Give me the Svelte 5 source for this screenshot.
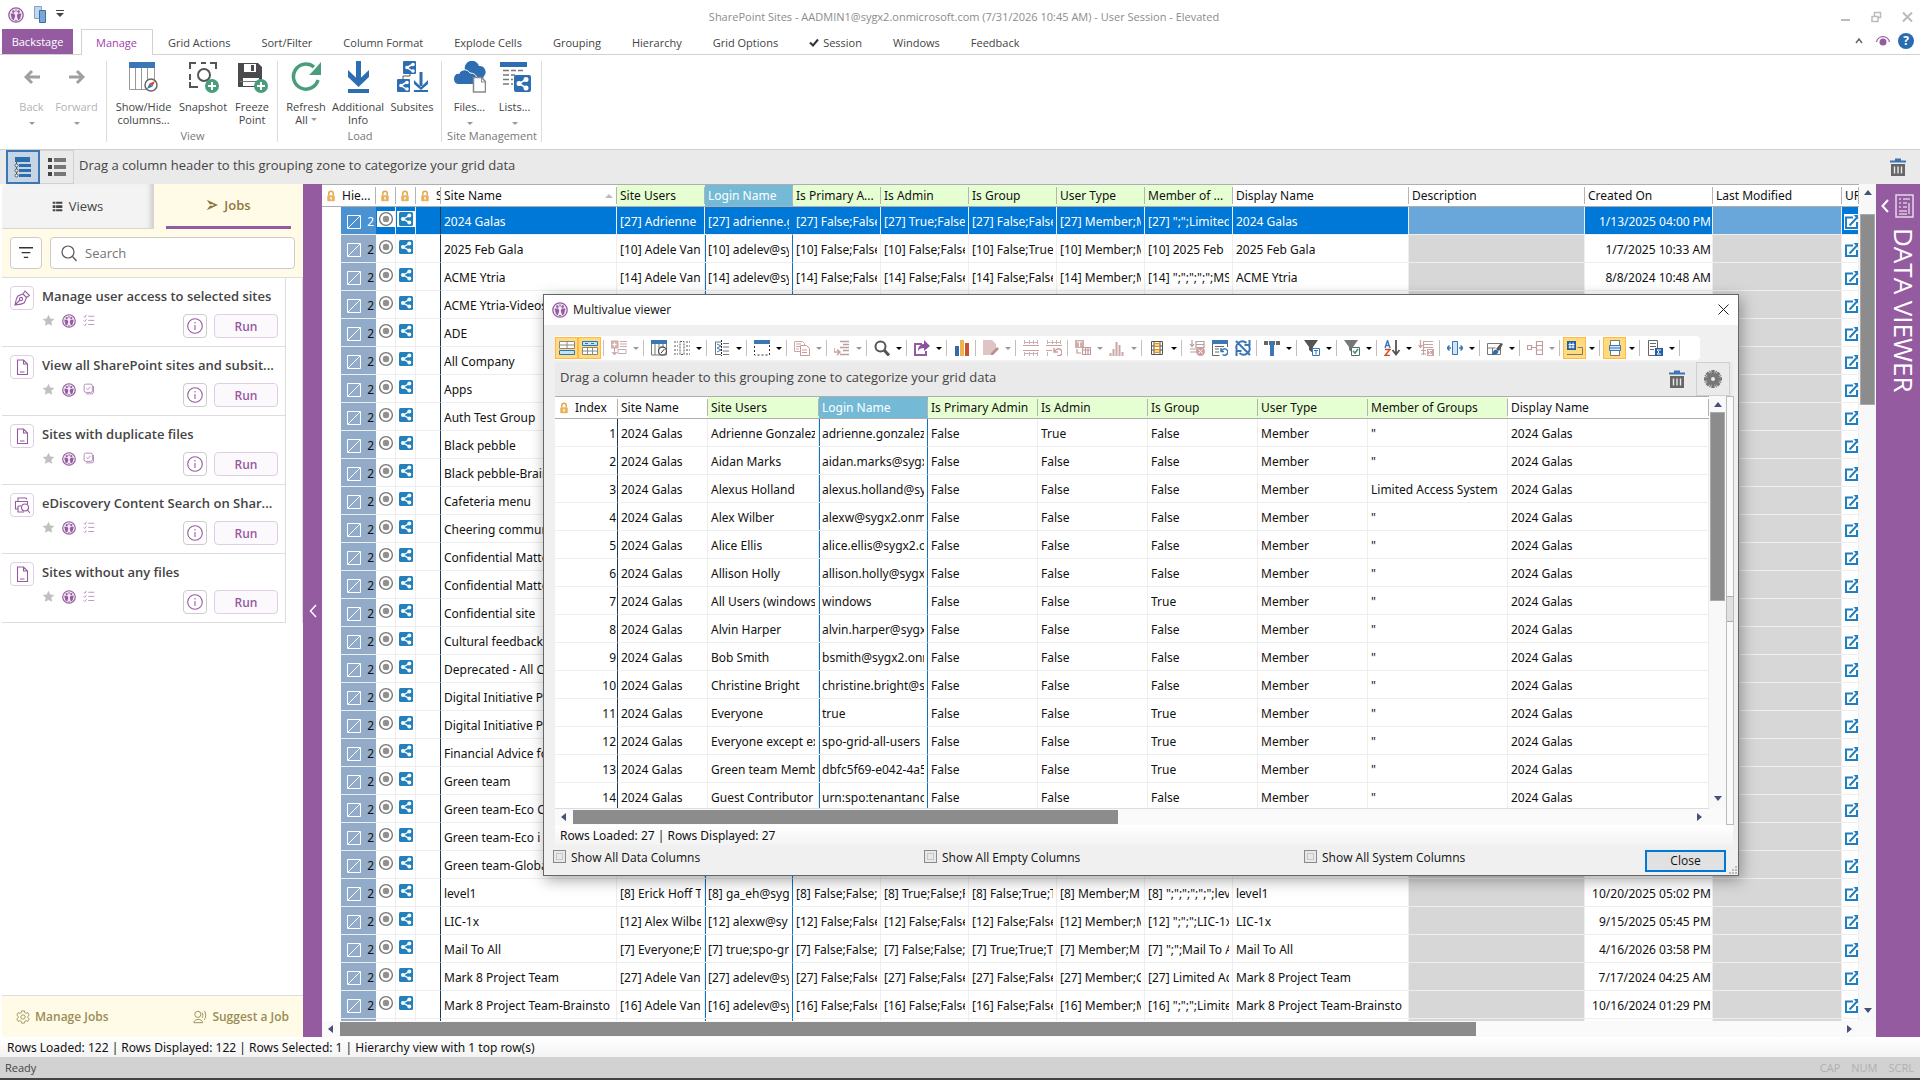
<script>
    const icons = {
        logo: `<circle cx="8" cy="8" r="7.2" fill="#f3e9f5" stroke="#955ba0" stroke-width="1.3"/><circle cx="5.4" cy="4.6" r="1.3" fill="#955ba0"/><circle cx="10.6" cy="4.6" r="1.3" fill="#955ba0"/><path d="M2.6 6.6h3.6l1 2.2-1.4 4.6-2-1.6z M13.4 6.6H9.8l-1 2.2 1.4 4.6 2-1.6z" fill="#955ba0"/><path d="M8 2.2v2.4M6.8 13.6h2.4" stroke="#955ba0"/>`,
        lock: `<path d="M5 7V4.6a3 3 0 0 1 6 0V7" fill="none" stroke="#e0a850" stroke-width="2"/><rect x="3" y="7" width="10" height="8" rx="1" fill="#e8b25c"/><circle cx="8" cy="10.5" r="1.2" fill="#fff"/><path d="M8 10.5v3" stroke="#fff"/>`,
        slash: `<path d="M1.5 1.5h13v13h-13zM2 14 14 2" fill="none" stroke="#fff"/>`,
        record: `<circle cx="8" cy="8" r="6.4" fill="#fff" stroke="#777" stroke-width="1.4"/><circle cx="8" cy="8" r="3.2" fill="#909090"/>`,
        share: `<rect x="1" y="1" width="14" height="14" rx="1.5" fill="#2280bc"/><path d="M11.5 4.5 5.2 8l6.3 3.6" fill="none" stroke="#fff" stroke-width="1.3"/><circle cx="11.3" cy="4.6" r="2" fill="#fff"/><circle cx="5" cy="8" r="2" fill="#fff"/><circle cx="11.3" cy="11.4" r="2" fill="#fff"/>`,
        link: `<path d="M9 3.5H2v10.5h11V8" fill="none" stroke="#1f7fc0" stroke-width="2"/><path d="M5.500 11.500 13 3.500" stroke="#1f7fc0" stroke-width="2"/><path d="M9.500 1h5.500v5.500z" fill="#1f7fc0"/>`,
        trash: `<path d="M0 2.5h16v2H0zM5 .5h6v2H5z" fill="#3b74b0"/><path d="M1 6h14v12H1z" fill="#666"/><path d="M4.5 8.5v7M8 8.5v7M11.5 8.5v7" stroke="#eaeaea" stroke-width="1.4"/>`,
        gear: `<g stroke="#777" stroke-width="3"><path d="M8 0v16M0 8h16M2.4 2.4l11.2 11.2M13.6 2.4 2.4 13.6"/><path d="M4.9.6l6.2 14.8M11.1.6 4.9 15.4M.6 4.9l14.8 6.2M.6 11.1l14.8-6.2" stroke-width="1"/></g><circle cx="8" cy="8" r="5" fill="#777"/><circle cx="8" cy="8" r="1.8" fill="#eaeaea"/>`,
        tree: `<path d="M4 2h15v5H4zM8 9h12v3H8zM8 14h12v3H8zM8 19h12v3H8z" fill="#2d6fae"/><path d="M5.5 7v14" stroke="#555"/><g fill="#fff" stroke="#555"><circle cx="5.5" cy="10.5" r="1.5"/><circle cx="5.5" cy="15.5" r="1.5"/><circle cx="5.5" cy="20.5" r="1.5"/></g>`,
        list: `<path d="M3 3h4v4H3zM3 10h4v4H3zM3 17h4v4H3z" fill="#444"/><path d="M9 3h12v4H9zM9 10h12v4H9zM9 17h12v4H9z" fill="#777"/>`,
        plusBadge: `<circle cx="25" cy="25" r="7" fill="#4a9d7a"/><path d="M25 21v8M21 25h8" stroke="#fff" stroke-width="2"/>`,
        columns: `<path d="M2.5 6v22.5h25V6M8.5 6v22M14.5 6v22M20.5 6v22" fill="#fff" stroke="#999"/><path d="M2 1h26v6H2z" fill="#3b77b5"/><circle cx="24" cy="24" r="6" fill="#fff" stroke="#666" stroke-width="1.5"/><path d="m28 20-2.500 5.500-3-3z" fill="#d9482b"/><path d="m20 28 2.500-5.500 3 3z" fill="#2e73b8"/>`,
        snapshot: `<path d="M3 8V2h6M14 2h5M23 2h6v6M3 13v6M3 21v5h8" fill="none" stroke="#555" stroke-width="2"/><circle cx="17" cy="14" r="6" fill="none" stroke="#555" stroke-width="2"/>`,
        freeze: `<path d="M2 2h20l4 4v20H2z" fill="#4b4b4f"/><path d="M8 3h12v8H8zM7 17h16v8H7z" fill="#fff"/><path d="M15 4h3v6h-3z" fill="#4b4b4f"/><path d="M4 20.500h22" stroke="#777"/>`,
        refresh: `<path d="M28 19A12.500 12.500 0 1 1 24 6" fill="none" stroke="#4a9d7a" stroke-width="3.500"/><path d="M31 1v13H19l5-5z" fill="#4a9d7a"/>`,
        download: `<path d="M16.500 0v20" stroke="#2f6db2" stroke-width="5"/><path d="M6 9l10.500 10L27 9v7L16.500 26 6 16z" fill="#2f6db2"/><path d="M6 28h21v4H6z" fill="#2f6db2"/>`,
        subsites: `<rect x="7" y="0" width="13" height="13" rx="1" fill="#2f6db2"/><rect x="1" y="18" width="13" height="13" rx="1" fill="#2f6db2"/><path d="m17 3-6 3.500 6 4M11 21l-6 3.500 6 4" fill="none" stroke="#fff" stroke-width="1.500"/><g fill="#fff"><circle cx="17" cy="3.500" r="1.800"/><circle cx="11" cy="6.500" r="1.800"/><circle cx="17" cy="10" r="1.800"/><circle cx="11" cy="21.500" r="1.800"/><circle cx="5" cy="24.500" r="1.800"/><circle cx="11" cy="28" r="1.800"/></g><path d="M7 18v-3h7v-2" fill="none" stroke="#555"/><path d="M25 11v14" stroke="#2f6db2" stroke-width="3"/><path d="m18 19 7 7 7-7v4l-7 6-7-6zM18 29h14v2H18z" fill="#2f6db2"/>`,
        files: `<path d="M10 20a7 7 0 0 1 2-11 7 7 0 0 1 14-4 6 6 0 0 1 5 10l-2 5z" fill="#2f6db2"/><path d="M1 18c0-4 3-6 5-5 2-5 9-5 11-1 5 0 6 3 6 6v5H6c-3 0-5-2-5-5z" fill="#2f6db2"/><path d="M5.500 13c3-6 9-5 11.500-1 4 0 6 2 6.500 4" fill="none" stroke="#fff"/><path d="M20.500 16.500h8l4 4V31h-12z" fill="#fff" stroke="#888" stroke-width="1.500"/><path d="M28.500 16.500V21h4" fill="none" stroke="#888"/>`,
        lists: `<path d="M2 1h27v5H2z" fill="#2f6db2"/><path d="M5 9.500h6M13 9.500h5M20 9.500h5M5 14h6M13 14h4M5 18.500h6M13 18.500h2M5 23h6M13 23h2" stroke="#777" stroke-width="1.500"/><rect x="16" y="14" width="17" height="17" rx="2" fill="#2f6db2"/><path d="m29 18-8 4.500 8 5" fill="none" stroke="#fff" stroke-width="1.500"/><g fill="#fff"><circle cx="28" cy="18.500" r="2.500"/><circle cx="21" cy="22.500" r="2.500"/><circle cx="28" cy="27" r="2.500"/></g>`,
        back: `<path d="M16 8H2M8 2 2 8l6 6" fill="none" stroke="#a0a0a0" stroke-width="3"/>`,
        forward: `<path d="M0 8h14M8 2l6 6-6 6" fill="none" stroke="#a0a0a0" stroke-width="3"/>`,
        views: `<path d="M1 1h4v3H1zM1 6h4v4H1zM1 12h4v3H1zM6 1h9v3H6zM6 6h9v4H6zM6 12h9v3H6z" fill="#444"/>`,
        jobs: `<path d="M1 1l15 7-15 7 4-6h5V7H5z" fill="#8a7a42"/>`,
        filter: `<path d="M0 2h16M3 7.5h10M5.500 13h5" stroke="#333" stroke-width="1.500"/>`,
        search: `<circle cx="7" cy="7" r="6" fill="none" stroke="#555" stroke-width="1.200"/><path d="m11.500 11.500 4 4.500" stroke="#555" stroke-width="1.200"/>`,
        pen: `<g fill="none" stroke="#955ba0" stroke-width="1.100"><path d="M1 15c1-4 1-7 3-9l5-2 3.500 3.500-2 5c-2 2-5 2-9.500 2.500zM9 4l2-3 4.500 4.500-3 2M1 15l5-5"/><circle cx="7" cy="9" r="1.600"/></g>`,
        doc: `<path d="M3.500 1h6l4 4v10.500h-10zM9.500 1v4h4M6 13h4.500" fill="none" stroke="#955ba0" stroke-width="1.100"/>`,
        discovery: `<g fill="none" stroke="#955ba0" stroke-width="1.100"><path d="M4 4.500V1h8l1 1.500M4 12H1.500V4.500h12V7M4 9v6h6M4 9h3"/><circle cx="11" cy="10.500" r="3.500"/><path d="m13.500 13 2.500 3"/></g>`,
        star: `<path d="m8 1 2.200 4.600 5 .6-3.700 3.400 1 5L8 12.200 3.500 14.600l1-5L.8 6.200l5-.6z" fill="#c0c0c0"/>`,
        checks: `<path d="m1 3 1.500 1.500L4.500 1M1 8.500 2.500 10l2-3M1 14l1.500 1.500 2-3M7 3h8M7 8.500h8M7 14h8" fill="none" stroke="#b58cbc" stroke-width="1.200"/>`,
        copyCheck: `<rect x="1.500" y="1.500" width="11" height="11" rx="2" fill="none" stroke="#b58cbc" stroke-width="1.300"/><path d="M14 4v8q0 2.500-2.500 2.500H4M4.500 7l2 2 3.500-4" fill="none" stroke="#b58cbc" stroke-width="1.300"/>`,
        info: `<circle cx="8" cy="8" r="7.300" fill="none" stroke="#955ba0" stroke-width="1.100"/><path d="M8 4v1.500M8 7v5" stroke="#a779b0" stroke-width="1.300"/>`,
        cog: `<g fill="none" stroke="#9a8c56"><circle cx="8" cy="8" r="2.500"/><path d="M6.500 1h3l.5 2 1.500.8 2-.8 1.500 2.700L13.500 7.500v1l1.500 1.800-1.500 2.700-2-.8-1.500.8-.5 2h-3L6 13l-1.500-.8-2 .8L1 10.300l1.500-1.800v-1L1 5.700 2.500 3l2 .8L6 3z"/></g>`,
        suggest: `<g fill="none" stroke="#9a8c56" stroke-width="1.100"><path d="M2 5a3.500 3.500 0 1 1 7 0 3.500 3.500 0 0 1-7 0M1 14.500c0-5 10-5 10 0zM10.500 3c1 2 1 4 0 6M13 1c2 3 2 7 0 10"/></g>`,
        // viewer toolbar
        rowBottom: `<path d="M.5 1.500h15v7H.5zM8 1.500v7M.5 5h15" fill="#fff" stroke="#888"/><path d="M.5 10.500h15v4H.5z" fill="#bfe3f7" stroke="#2f75b5"/>`,
        rowTop: `<path d="M.5 1.500h15v4H.5z" fill="#bfe3f7" stroke="#2f75b5"/><path d="M3 3.500h3M9 3.500h3" stroke="#2f75b5"/><path d="M.5 7.500h15v7H.5zM5.500 7.500v7M10.500 7.500v7M.5 11h15" fill="#fff" stroke="#888"/>`,
        groupAdd: `<path d="M0 1h7v7H0zM3.500 8v7M1 12l2.500 3L6 12" fill="#d9b7b7" stroke="#cfa5a5"/><path d="M1.500 4.500h4M3.500 2.500v4" stroke="#fff"/><path d="M9 1.500h7M9 4h7M9 6.500h7M7 9.500h8v4H7z" fill="none" stroke="#c9aaaa"/>`,
        gridCompass: `<path d="M.5 1h15v14H.5zM4 4v11M8 4v11M12 4v11" fill="#fff" stroke="#777"/><path d="M0 0h16v4H0z" fill="#3b77b5"/><circle cx="11.500" cy="11" r="4" fill="#fff" stroke="#555" stroke-width="1.300"/><path d="m10 13 3.500-4" stroke="#333"/>`,
        colDash: `<path d="M6 1.500h4v13H6zM0 2h4M0 6h4M0 10h4M0 14h4M12 2h4M12 6h4M12 10h4M12 14h4" fill="none" stroke="#555" stroke-dasharray="2 1"/>`,
        colZip: `<path d="M1 2h6M1 14.500h6M1.500 2v12M9 3.500h6M9 7h6M9 11h6M9 14.500h6" stroke="#777"/><path d="m3 4 4 2-4 2 4 2-4 2" fill="none" stroke="#3b77b5"/><path d="M7.500 0v16" stroke="#222" stroke-dasharray="2 1"/>`,
        selectBox: `<path d="M.5 2v13h15V2" fill="none" stroke="#333" stroke-dasharray="2 2"/><path d="M0 0h16v4H0z" fill="#3b77b5"/>`,
        copy: `<path d="M.5 1.500h8l2 2v8H.5zM2 4h5M2 6.500h4M2 9h3" fill="#fff" stroke="#cfa5a5"/><path d="M6.500 5.500h6l3 3v7h-9zM8 10h5M8 12.500h5" fill="#fff" stroke="#c99a9a"/>`,
        indent: `<path d="M6 1.500h9M9 4.500h6M6 7.500h9M9 10.500h6M6 14.500h9" stroke="#b9a0a0" stroke-width="1.300"/><path d="M0 8v4h5M3 9.500 6 12l-3 3" fill="none" stroke="#cf9f9f" stroke-width="1.500"/>`,
        find: `<circle cx="6.500" cy="6.500" r="5" fill="none" stroke="#555" stroke-width="2"/><path d="m10 10 5 5.500" stroke="#555" stroke-width="3"/>`,
        exportTo: `<path d="M8 4H1v11h11v-4" fill="none" stroke="#955ba0" stroke-width="2"/><path d="M4 11c0-5 3-7 6-7V0l6 6-6 5V8c-3 0-5 1-6 3z" fill="#8a51a0"/>`,
        chart: `<path d="M1 6h4v10H1z" fill="#2e6da8"/><path d="M6 0h4v16H6z" fill="#eeb34e"/><path d="M11 3h4v13h-4z" fill="#c8532c"/>`,
        edit: `<path d="M0 0h9l4 4v5l-5 6H0z" fill="#dfc4c4"/><path d="m8 13 6-6 2 2-6 6H8z" fill="#b98f8f"/>`,
        splitRows: `<path d="M0 5.500h16M0 10.500h16" stroke="#cf9f9f"/><path d="M1.500 0v4M6.500 0v4M10.500 0v4M14.500 0v4M1.500 12v4M6.500 12v4M10.500 12v4M14.500 12v4M1 2.500h14M1 13.500h14" stroke="#c9b3b3"/>`,
        undoRows: `<path d="M0 5.500h16M0 10.500h6" stroke="#cf9f9f"/><path d="M1.500 0v4M6.500 0v4M10.500 0v4M14.500 0v4M1.500 12v4M1 2.500h14" stroke="#c9b3b3"/><path d="M8 8v4h4M9 12a3.500 3.500 0 1 1 2 3.500" fill="none" stroke="#cf9f9f" stroke-width="1.500"/>`,
        toCalendar: `<path d="M0 0h9v8H0z" fill="#cfaeae"/><path d="M2 2h5M4.500 2v5" stroke="#fff"/><path d="M2 9v4h4M7.500 7.500h8v7h-8zM8 10h8M10.500 8v7M13 8v7" fill="none" stroke="#c39a9a" stroke-width="1.200"/>`,
        histogram: `<path d="M1.500 16v-3M4.500 16V9M7.500 16V2M10.500 16V5M13.500 16v-4" stroke="#cba6a6" stroke-width="2"/>`,
        cellPick: `<path d="M2.500 1.500h11v13h-11zM2 6h12M2 10h12M5 2v12M11 2v12" fill="#fff" stroke="#555"/><path d="M5.500 3.500h5v3h-5zM5.500 9.500h5v3h-5z" fill="#ffd27a" stroke="#d59123"/>`,
        sumRemove: `<path d="M3 0v6M1 4l2 2.500L5 4M7 1.500h8v6H7zM7 4.500h8M1 9h7M1 12h6" fill="none" stroke="#b9a0a0" stroke-width="1.200"/><circle cx="11.500" cy="11.500" r="4.500" fill="#cfa0a0"/><path d="m9.500 9.500 4 4m0-4-4 4" stroke="#fff"/>`,
        gridRefresh: `<path d="M.5 3v12.500h7M15.500 3v4M3 6.500h9M3 9h4M3 12h4" fill="none" stroke="#666"/><path d="M0 0h16v4H0z" fill="#3b77b5"/><path d="M9 8v3.500h3M9.500 11a3.200 3.200 0 1 1 1 3.500" fill="none" stroke="#3b77b5" stroke-width="1.500"/>`,
        noRefresh: `<path d="M2 10a6 6 0 0 1 9.500-7M14 6a6 6 0 0 1-9.500 7M14.500 0v5h-5M1.500 16v-5h5M1 1l14 14" fill="none" stroke="#3b77b5" stroke-width="2"/>`,
        freezeTop: `<path d="M0 1h16v4H0z" fill="#666"/><path d="M6 1h4v15H6z" fill="#3b77b5"/><path d="M4.500 1v4M11.500 1v4" stroke="#fff"/>`,
        filterText: `<path d="M0 0h14L9 7v6l-4-3V7z" fill="#555"/><path d="M8.500 8.500h7v7h-7z" fill="#fff" stroke="#3b77b5"/><path d="M10 10.500h4M12 10.500v4" stroke="#3b77b5"/>`,
        filterCheck: `<path d="M0 0h14L9 7v6l-4-3V7z" fill="#777"/><path d="M7.500 7.500h8v8h-8z" fill="#fff" stroke="#666"/><path d="m9 11 2 2 3-4" fill="none" stroke="#2b9a5b" stroke-width="1.500"/>`,
        sortAZ: `<path d="M1 8 3.500.500 6 8M2 5.500h3" fill="none" stroke="#3b77b5" stroke-width="1.400"/><path d="M1 9.500h5l-5 6h5" fill="none" stroke="#d04a2b" stroke-width="1.400"/><path d="M12 0v14M8.500 10l3.500 4.500L15.500 10" fill="none" stroke="#555" stroke-width="1.800"/>`,
        sumList: `<path d="M2.500 0v7M.5 5l2 2.500 2-2.500M6 1.500h9M6 4.500h9M6 7.500h9M3 10.500h5M3 14h5M5.500 1v14" fill="none" stroke="#c1a3a3" stroke-width="1.200"/><path d="M9 9h7v7H9z" fill="#cfa5a5"/><path d="M14 10.500h-3.500l2 2-2 2H14" fill="none" stroke="#fff"/>`,
        fitWidth: `<path d="M5.500 1.500h5v13h-5z" fill="#cfe6f7" stroke="#3b77b5"/><path d="M0 8h4M16 8h-4M2.500 5.500 0 8l2.500 2.500M13.500 5.500 16 8l-2.500 2.500" fill="none" stroke="#3b77b5" stroke-width="1.500"/>`,
        paint: `<path d="M.5 3.500h13v11H.5zM.5 8h8M5.500 8v7" fill="#fff" stroke="#777"/><path d="m9 9 5-6 2 1-4 7z" fill="#555"/><path d="M5 15c1-4 2-6 5-5s1 5-5 5z" fill="#2e6da8"/>`,
        hierarchy: `<path d="M.5 5.500h4v4h-4zM5 7.500h4M9.500 1.500h6v13h-6zM9.500 5.500h6M9.500 10h6" fill="none" stroke="#c19c9c" stroke-width="1.200"/>`,
        numberTag: `<path d="M0 1h9v9H0z" fill="#1f5fa8"/><path d="M3 2.500v6M6 2.500v6M1.500 4.500h6M1.500 7h6" stroke="#fff"/><path d="M0 14.500h15.500v-7h-5" fill="none" stroke="#777"/>`,
        rowGap: `<path d="M3.500 5V.500h9V5M3.500 11v4.500h9V11" fill="#fff" stroke="#777"/><path d="M2.500 5.500h11v5h-11zM2.500 8h11" fill="#cfe6f7" stroke="#3b77b5"/>`,
        totals: `<path d="M1.500.500h9v15h-9zM3 3.500h6M3 6.500h6M3 9.500h4" fill="#fff" stroke="#666"/><path d="M8 8h8v8H8z" fill="#1f5fa8"/><path d="M14 10h-4l2 2-2 2h4" fill="none" stroke="#fff"/>`,
    }

    const tabs = ["Manage", "Grid Actions", "Sort/Filter", "Column Format", "Explode Cells", "Grouping", "Hierarchy", "Grid Options", "Session", "Windows", "Feedback"]

    const ribbon = [
        { name: "", items: [
            { icon: "back", label: ["Back"], w: 45, off: true, menu: true },
            { icon: "forward", label: ["Forward"], w: 45, off: true, menu: true },
        ] },
        { name: "View", items: [
            { icon: "columns", label: ["Show/Hide", "columns..."], w: 63 },
            { icon: "snapshot", label: ["Snapshot"], w: 56, badge: true },
            { icon: "freeze", label: ["Freeze", "Point"], w: 42, badge: true },
        ] },
        { name: "Load", items: [
            { icon: "refresh", label: ["Refresh", "All"], w: 46, inlineMenu: true },
            { icon: "download", label: ["Additional", "Info"], w: 58 },
            { icon: "subsites", label: ["Subsites"], w: 50 },
        ] },
        { name: "Site Management", items: [
            { icon: "files", label: ["Files..."], w: 45, menu: true },
            { icon: "lists", label: ["Lists..."], w: 45, menu: true },
        ] },
    ]

    const jobs = [
        { icon: "pen", title: "Manage user access to selected sites", kind: "checks" },
        { icon: "doc", title: "View all SharePoint sites and subsit...", kind: "copyCheck" },
        { icon: "doc", title: "Sites with duplicate files", kind: "copyCheck" },
        { icon: "discovery", title: "eDiscovery Content Search on Shar...", kind: "checks" },
        { icon: "doc", title: "Sites without any files", kind: "checks" },
    ]

    const siteCols = [
        { name: "Site Name", w: 176, sorted: true },
        { name: "Site Users", w: 88, green: true },
        { name: "Login Name", w: 88, picked: true },
        { name: "Is Primary A...", w: 88, green: true },
        { name: "Is Admin", w: 88, green: true },
        { name: "Is Group", w: 88, green: true },
        { name: "User Type", w: 88, green: true },
        { name: "Member of ...", w: 88, green: true },
        { name: "Display Name", w: 176 },
        { name: "Description", w: 176 },
        { name: "Created On", w: 128 },
        { name: "Last Modified", w: 129 },
    ]

    const site = (name, values = [], created = "") => [name, ...Array.from({ length: 7 }, (_, i) => values[i] ?? ""), name, "", created, ""]
    const sites = [
        site("2024 Galas", ["[27] Adrienne", "[27] adrienne.g", "[27] False;False", "[27] True;False", "[27] False;False", "[27] Member;M", '[27] ";";Limited'], "1/13/2025 04:00 PM"),
        site("2025 Feb Gala", ["[10] Adele Van", "[10] adelev@sy", "[10] False;False", "[10] False;False", "[10] False;True", "[10] Member;M", "[10] 2025 Feb"], "1/7/2025 10:33 AM"),
        site("ACME Ytria", ["[14] Adele Van", "[14] adelev@sy", "[14] False;False", "[14] False;False", "[14] False;False", "[14] Member;M", '[14] ";";";";";MS'], "8/8/2024 10:48 AM"),
        ...["ACME Ytria-Videos", "ADE", "All Company", "Apps", "Auth Test Group", "Black pebble", "Black pebble-Brain", "Cafeteria menu", "Cheering commun", "Confidential Matter", "Confidential Matter", "Confidential site", "Cultural feedback", "Deprecated - All C", "Digital Initiative Pl", "Digital Initiative Pl", "Financial Advice fo", "Green team", "Green team-Eco C", "Green team-Eco i", "Green team-Globa"].map((n) => site(n)),
        site("level1", ["[8] Erick Hoff T", "[8] ga_eh@syg", "[8] False;False;", "[8] True;False;F", "[8] False;True;T", "[8] Member;M", '[8] ";";";";";";lev'], "10/20/2025 05:02 PM"),
        site("LIC-1x", ["[12] Alex Wilbe", "[12] alexw@sy", "[12] False;False", "[12] False;False", "[12] False;False", "[12] Member;M", '[12] ";";";LIC-1x'], "9/15/2025 05:45 PM"),
        site("Mail To All", ["[7] Everyone;Ev", "[7] true;spo-gr", "[7] False;False;", "[7] False;False;", "[7] True;True;Tr", "[7] Member;M", '[7] ";";Mail To A'], "4/16/2026 03:58 PM"),
        site("Mark 8 Project Team", ["[27] Adele Van", "[27] adelev@sy", "[27] False;False", "[27] False;False", "[27] False;False", "[27] Member;G", "[27] Limited Ac"], "7/17/2024 04:25 AM"),
        site("Mark 8 Project Team-Brainsto", ["[16] Adele Van", "[16] adelev@sy", "[16] False;False", "[16] False;False", "[16] False;False", "[16] Member;M", '[16] ";";";Limite'], "10/16/2024 01:29 PM"),
        site(""),
    ]

    // "v" is a drop-down arrow, "|" a divider, "*" marks a pressed button
    const toolbar = "*rowBottom *rowTop | -groupAdd -v | gridCompass colDash v | colZip v | selectBox v | -copy -v | -indent -v | find v | exportTo v | chart | -edit -v | -splitRows -undoRows | -toCalendar -v -histogram -v | cellPick v | -sumRemove gridRefresh noRefresh | freezeTop v | filterText v | filterCheck v | sortAZ v -sumList | fitWidth v | paint v | -hierarchy -v | *numberTag v | *rowGap v | totals v |".split(" ")

    const viewerCols = [
        { name: "Site Name", w: 90 },
        { name: "Site Users", w: 111, green: true },
        { name: "Login Name", w: 109, picked: true },
        { name: "Is Primary Admin", w: 110, green: true },
        { name: "Is Admin", w: 110, green: true },
        { name: "Is Group", w: 110, green: true },
        { name: "User Type", w: 110, green: true },
        { name: "Member of Groups", w: 140, green: true },
        { name: "Display Name", w: 0 },
    ]

    const users = [
        ["Adrienne Gonzalez", "adrienne.gonzalez", "True", "False"],
        ["Aidan Marks", "aidan.marks@sygx", "False", "False"],
        ["Alexus Holland", "alexus.holland@sy", "False", "False"],
        ["Alex Wilber", "alexw@sygx2.onm", "False", "False"],
        ["Alice Ellis", "alice.ellis@sygx2.o", "False", "False"],
        ["Allison Holly", "allison.holly@sygx", "False", "False"],
        ["All Users (windows", "windows", "False", "True"],
        ["Alvin Harper", "alvin.harper@sygx", "False", "False"],
        ["Bob Smith", "bsmith@sygx2.onn", "False", "False"],
        ["Christine Bright", "christine.bright@sy", "False", "False"],
        ["Everyone", "true", "False", "True"],
        ["Everyone except ex", "spo-grid-all-users", "False", "True"],
        ["Green team Memb", "dbfc5f69-e042-4a5", "False", "True"],
        ["Guest Contributor", "urn:spo:tenantano", "False", "False"],
    ].map(([name, login, admin, group], i) => ["2024 Galas", name, login, "False", admin, group, "Member", i === 2 ? "Limited Access System" : '"', "2024 Galas"])

    const options = ["Show All Data Columns", "Show All Empty Columns", "Show All System Columns"]

    let open = $state(true)
    let selected = $state(0)
    let query = $state("")
</script>

{#snippet icon(name, w = 16, h = w, box = `0 0 ${w} ${h}`)}
    <svg width={w} height={h} viewBox={box} aria-hidden="true">{@html icons[name]}</svg>
{/snippet}

{#snippet head(col)}
    <th class:green={col.green} class:picked={col.picked}>
        <div class="th">
            {col.name}
            {#if col.sorted}<i class="tri up light"></i>{/if}
        </div>
    </th>
{/snippet}

{#snippet zoneText()}
    <span class="zone-text">Drag a column header to this grouping zone to categorize your grid data</span>
{/snippet}

<div class="app">
    <header class="titlebar">
        <div class="quick">
            {@render icon("logo", 16)}
            <svg width="12" height="17" viewBox="0 0 12 17"><path d="M.5.5h7v12h-7z" fill="#c3d6ea" stroke="#7ba3cc" /><path d="M5.5 4.5h6v12h-6z" fill="#79a6d6" stroke="#3a6ea5" /></svg>
            <i class="tri down bar"></i>
        </div>
        <h1>SharePoint Sites - AADMIN1@sygx2.onmicrosoft.com (7/31/2026 10:45 AM) - User Session - Elevated</h1>
        <div class="win">
            <button aria-label="Minimize"><svg width="11" height="12" viewBox="0 0 11 12"><path d="M1 9h9" stroke="#bbb" stroke-width="2" /></svg></button>
            <button aria-label="Restore"><svg width="11" height="12" viewBox="0 0 11 12"><path d="M1 5.5h6v5H1zM3.5 5V1.500h6v5H7.5" fill="none" stroke="#bbb" stroke-width="1.500" /></svg></button>
            <button aria-label="Close window"><svg width="11" height="12" viewBox="0 0 11 12"><path d="m1 1.500 9 9m0-9-9 9" stroke="#bbb" stroke-width="2" /></svg></button>
        </div>
    </header>

    <nav class="tabs">
        <button class="backstage">Backstage</button>
        {#each tabs as tab, i}
            <button class="tab" class:active={i === 0}>
                {#if tab === "Session"}<svg width="10" height="9" viewBox="0 0 10 9"><path d="m1 4.500 3 3 5-6" fill="none" stroke="#333" stroke-width="2" /></svg>{/if}
                {tab}
            </button>
        {/each}
        <div class="corner">
            <svg width="8" height="7" viewBox="0 0 8 7"><path d="m1 6 3-4 3 4" fill="none" stroke="#666" stroke-width="1.500" /></svg>
            <svg width="14" height="11" viewBox="0 0 14 11"><path d="M.5 7a6.600 6.600 0 0 1 13 0" fill="none" stroke="#955ba0" stroke-width="1.200" /><circle cx="7" cy="7" r="3.500" fill="#955ba0" /></svg>
            <span class="help">?</span>
        </div>
    </nav>

    <section class="ribbon">
        {#each ribbon as group}
            <div class="group">
                <div class="tools">
                    {#each group.items as item}
                        <button class="tool" class:off={item.off} disabled={item.off} style:width="{item.w}px">
                            <span class="pic">
                                {#if item.off}
                                    {@render icon(item.icon, 16)}
                                {:else}
                                    <svg width="33" height="32" viewBox="0 0 33 32">{@html icons[item.icon]}{#if item.badge}{@html icons.plusBadge}{/if}</svg>
                                {/if}
                            </span>
                            {#each item.label as line, i}
                                <span class="line">{line}{#if item.inlineMenu && i}<i class="tri down small"></i>{/if}</span>
                            {/each}
                            {#if item.menu}<i class="tri down small"></i>{/if}
                        </button>
                    {/each}
                </div>
                <div class="group-name">{group.name}</div>
            </div>
        {/each}
    </section>

    <section class="zone">
        <button class="mode on" aria-label="Hierarchy view">{@render icon("tree", 24)}</button>
        <button class="mode" aria-label="Flat view">{@render icon("list", 24)}</button>
        {@render zoneText()}
        <button class="trash" aria-label="Clear grouping">{@render icon("trash", 16, 18)}</button>
    </section>

    <main>
        <aside class="panel">
            <div class="panel-tabs">
                <button>{@render icon("views", 11, 11, "0 0 16 16")} Views</button>
                <button class="on">{@render icon("jobs", 12, 12, "0 0 16 16")} Jobs</button>
            </div>
            <div class="find">
                <button class="filter" aria-label="Filter jobs">{@render icon("filter", 14, 14, "0 0 16 16")}</button>
                <label class="search">
                    {@render icon("search", 16, 17)}
                    <input type="text" placeholder="Search" aria-label="Search" bind:value={query} />
                </label>
            </div>
            <ul class="jobs">
                {#each jobs as job}
                    <li>
                        <span class="job-icon">{@render icon(job.icon, 16)}</span>
                        <div class="job-body">
                            <h2>{job.title}</h2>
                            <div class="job-row">
                                {@render icon("star", 13, 13, "0 0 16 16")}
                                {@render icon("logo", 14, 14, "0 0 16 16")}
                                {@render icon(job.kind, 12, 12, "0 0 16 16")}
                                <button class="info" aria-label="About this job">{@render icon("info", 16)}</button>
                                <button class="run">Run</button>
                            </div>
                        </div>
                    </li>
                {/each}
            </ul>
            <footer>
                <button>{@render icon("cog", 14, 14, "0 0 16 16")} Manage Jobs</button>
                <button>{@render icon("suggest", 14, 14, "0 0 16 16")} Suggest a Job</button>
            </footer>
        </aside>

        <button class="splitter" aria-label="Collapse panel">
            <svg width="8" height="14" viewBox="0 0 8 14"><path d="M7 1 1.500 7 7 13" fill="none" stroke="#fff" stroke-width="1.500" /></svg>
        </button>

        <section class="grid-area">
            <div class="grid-main">
                <div class="clip">
                    <table class="sites">
                        <colgroup>
                            <col style:width="19px" /><col style:width="35px" /><col style:width="20px" /><col style:width="20px" /><col style:width="25px" />
                            {#each siteCols as col}<col style:width="{col.w}px" />{/each}
                            <col />
                        </colgroup>
                        <thead>
                            <tr>
                                <th colspan="2"><div class="th locked">{@render icon("lock", 12, 12, "0 0 16 16")} Hie...</div></th>
                                <th><div class="th locked">{@render icon("lock", 12, 12, "0 0 16 16")}</div></th>
                                <th><div class="th locked">{@render icon("lock", 12, 12, "0 0 16 16")}</div></th>
                                <th><div class="th locked">{@render icon("lock", 12, 12, "0 0 16 16")} S</div></th>
                                {#each siteCols as col}{@render head(col)}{/each}
                                <th><div class="th">URL</div></th>
                            </tr>
                        </thead>
                        <tbody>
                            {#each sites as row, r}
                                <tr class:selected={r === selected} onclick={() => (selected = r)}>
                                    <td class="gutter"></td>
                                    <td class="level"><span>{@render icon("slash", 16)} 2</span></td>
                                    <td class="pin"><span>{@render icon("record", 16)}</span></td>
                                    <td class="pin"><span>{@render icon("share", 16)}</span></td>
                                    <td class="frozen"></td>
                                    {#each row as cell, c}
                                        <td class:picked={c === 2} class:date={c === 10} class:empty={c === 9 || c === 11}><div>{cell}</div></td>
                                    {/each}
                                    <td class="url">{@render icon("link", 16)}</td>
                                </tr>
                            {/each}
                        </tbody>
                    </table>
                </div>
                <div class="vbar"><i class="tri up"></i><span class="thumb" style:height="189px"></span><i class="tri down"></i></div>
            </div>
            <div class="hbar"><i class="tri left"></i><span class="thumb" style:width="1136px"></span><i class="tri right"></i></div>
        </section>

        <aside class="viewer-tab">
            <svg class="chev" width="8" height="14" viewBox="0 0 8 14"><path d="M7 1 1.500 7 7 13" fill="none" stroke="#fff" stroke-width="2" /></svg>
            <div class="viewer-side">
                <svg width="19" height="24" viewBox="0 0 19 24"><path d="M1 1h17v22H1z" fill="none" stroke="#e6d6ea" stroke-width="1.500" /><path d="M4 5h2M4 9h2M4 13h2M4 17h8M8 5h7M8 9h4M8 13h4M14 9v11M4 20h8" stroke="#fff" /></svg>
                <span>DATA VIEWER</span>
            </div>
        </aside>
    </main>

    <div class="counts">Rows Loaded: 122 | Rows Displayed: 122 | Rows Selected: 1 | Hierarchy view with 1 top row(s)</div>
    <footer class="status">
        <span>Ready</span>
        <span class="keys"><span>CAP</span><span>NUM</span><span>SCRL</span></span>
    </footer>
    <div class="edge"></div>

    {#if open}
        <div class="dialog" role="dialog" aria-label="Multivalue viewer">
            <div class="dialog-title">
                {@render icon("logo", 16)}
                <h2>Multivalue viewer</h2>
                <button aria-label="Close viewer" onclick={() => (open = false)}><svg width="11" height="11" viewBox="0 0 11 11"><path d="m.5.5 10 10m0-10-10 10" stroke="#222" /></svg></button>
            </div>
            <div class="toolbar">
                {#each toolbar as t}
                    {@const off = t[0] === "-"}
                    {@const on = t[0] === "*"}
                    {@const name = off || on ? t.slice(1) : t}
                    {#if t === "|"}
                        <span class="divider"></span>
                    {:else if name === "v"}
                        <button class="drop" class:off aria-label="More"><i class="tri down"></i></button>
                    {:else}
                        <button class="tb" class:on aria-label={name}>{@render icon(name, 16)}</button>
                    {/if}
                {/each}
            </div>
            <div class="zone inner">
                {@render zoneText()}
                <button class="trash" aria-label="Clear viewer grouping">{@render icon("trash", 16, 18)}</button>
                <button class="settings" aria-label="Settings">{@render icon("gear", 18, 18, "0 0 16 16")}</button>
            </div>
            <div class="dialog-grid">
                <div class="dialog-table">
                    <div class="grid-main">
                        <div class="clip">
                            <table>
                                <colgroup>
                                    <col style:width="63px" />
                                    {#each viewerCols as col}<col style:width={col.w ? `${col.w}px` : "auto"} />{/each}
                                </colgroup>
                                <thead>
                                    <tr>
                                        <th><div class="th locked">{@render icon("lock", 12, 12, "0 0 16 16")} Index</div></th>
                                        {#each viewerCols as col}{@render head(col)}{/each}
                                    </tr>
                                </thead>
                                <tbody>
                                    {#each users as row, r}
                                        <tr>
                                            <td class="frozen num">{r + 1}</td>
                                            {#each row as cell, c}<td class:picked={c === 2}><div>{cell}</div></td>{/each}
                                        </tr>
                                    {/each}
                                </tbody>
                            </table>
                        </div>
                        <div class="vbar"><i class="tri up"></i><span class="thumb" style:height="187px"></span><i class="tri down"></i></div>
                    </div>
                    <div class="hbar"><i class="tri left"></i><span class="thumb" style:width="545px"></span><i class="tri right"></i></div>
                </div>
                <div class="rail"><span></span></div>
            </div>
            <div class="counts">Rows Loaded: 27 | Rows Displayed: 27</div>
            <div class="options">
                {#each options as option}
                    <label><input type="checkbox" /> {option}</label>
                {/each}
                <button class="close" onclick={() => (open = false)}>Close</button>
            </div>
            <svg class="grip" width="9" height="9" viewBox="0 0 9 9"><path d="M6 0h2v2H6zM3 3h2v2H3zM6 3h2v2H6zM0 6h2v2H0zM3 6h2v2H3zM6 6h2v2H6z" fill="#bbb" /></svg>
        </div>
    {/if}
</div>

<style>
    :global(body) {
        margin: 0;
        background: #fff;
    }

    .app {
        position: relative;
        display: flex;
        flex-direction: column;
        height: 100vh;
        overflow: hidden;
        color: #111;
        font: 12px/16px "Segoe UI", "Open Sans", "Noto Sans", sans-serif;
    }

    svg {
        display: block;
        flex: none;
    }

    button {
        display: flex;
        align-items: center;
        justify-content: center;
        box-sizing: border-box;
        padding: 0;
        border: 0;
        background: none;
        color: inherit;
        font: inherit;
        white-space: nowrap;
    }

    h1, h2 {
        margin: 0;
        font: inherit;
    }

    /* triangles */
    .tri {
        display: block;
        flex: none;
        width: 0;
        height: 0;
        border: 4px solid transparent;
    }
    .tri.up { border-top: 0; border-bottom: 5px solid #46507a; }
    .tri.up.light { border-bottom: 4px solid #bbb; margin-left: auto; margin-right: 3px; }
    .tri.down { border-bottom: 0; border-top: 5px solid #46507a; }
    .tri.down.small { border-width: 3px 3px 0; border-top-color: #999; }
    .tri.left { border-left: 0; border-right: 5px solid #46507a; }
    .tri.right { border-right: 0; border-left: 5px solid #46507a; }
    .tri.bar { border-top: 4px solid #444; box-shadow: 0 -2px #fff, 0 -3px #444; }

    .titlebar {
        display: flex;
        align-items: center;
        height: 29px;
        padding: 0 7px 0 8px;
    }
    .quick {
        display: flex;
        align-items: center;
        gap: 10px;
        width: 80px;
    }
    .titlebar h1 {
        flex: 1;
        padding-top: 4px;
        color: #8c8c8c;
        font-size: 11px;
        text-align: center;
    }
    .win {
        display: flex;
        gap: 20px;
        width: 73px;
        padding-top: 4px;
    }

    .tabs {
        display: flex;
        height: 26px;
        padding-left: 2px;
        box-shadow: inset 0 -1px #d2d2d2;
        color: #444;
        font-size: 11px;
    }
    .backstage {
        width: 71px;
        height: 25px;
        margin-right: 8px;
        background: #955ba0;
        color: #fff;
    }
    .tab {
        gap: 4px;
        padding: 0 15px 0 14px;
        border: 1px solid transparent;
        border-bottom: 0;
    }
    .tab.active {
        border-color: #d2d2d2;
        background: #fff;
        color: #a03fae;
    }
    .corner {
        display: flex;
        align-items: center;
        gap: 13px;
        margin: -3px 6px 0 auto;
    }
    .corner svg:nth-child(2) {
        margin-right: -5px;
    }
    .help {
        width: 16px;
        border-radius: 50%;
        background: #2a6cb0;
        color: #fff;
        font-size: 12px;
        font-weight: 700;
        text-align: center;
    }

    .ribbon {
        display: flex;
        height: 94px;
        color: #444;
        font-size: 11px;
    }
    .group {
        display: flex;
        flex-direction: column;
        justify-content: space-between;
        height: 81px;
        margin-top: 6px;
        padding: 0 4px 0 5px;
        border-right: 1px solid #dcdcdc;
    }
    .group:first-child {
        padding: 0 7px 0 9px;
    }
    .tools {
        display: flex;
    }
    .tool {
        flex: none;
        flex-direction: column;
        justify-content: flex-start;
    }
    .tool.off {
        color: #b4b4b4;
    }
    .pic {
        display: grid;
        place-items: center;
        height: 39px;
    }
    .pic svg {
        margin-top: -7px;
    }
    .line {
        display: flex;
        align-items: center;
        gap: 3px;
        line-height: 13px;
    }
    .tool > .tri {
        margin-top: 9px;
    }
    .group-name {
        color: #777;
        text-align: center;
        line-height: 12px;
        white-space: nowrap;
    }

    .zone {
        display: flex;
        align-items: flex-start;
        height: 34px;
        padding: 0 14px 0 6px;
        border-top: 1px solid #cfcfcf;
        background: #eaeaea;
        color: #444;
    }
    .mode {
        width: 34px;
        height: 34px;
        border: 1px solid #d0d0d0;
        border-left: 0;
    }
    .mode.on {
        border: 2px solid #3b77b5;
        background: #c6d5e3;
    }
    .zone-text {
        flex: 1;
        padding: 7px 5px;
        font-size: 13px;
    }
    .trash {
        align-self: center;
    }

    main {
        display: flex;
        flex: 1;
        min-height: 0;
    }

    .panel {
        display: flex;
        flex-direction: column;
        width: 301px;
        padding-left: 2px;
        background: #fff;
        color: #444;
        font-weight: 600;
    }
    .panel-tabs {
        display: flex;
        height: 45px;
        background: #fffbe6;
    }
    .panel-tabs button {
        flex: 1;
        gap: 6px;
        border: 1px solid #d8d8d8;
        border-width: 0 1px 1px 0;
        border-radius: 6px 0 0;
        background: #f3f3f3;
        box-shadow: inset -6px 0 6px -5px #bbb;
        font-size: 13px;
        font-weight: 400;
    }
    .panel-tabs .on {
        flex: none;
        width: 125px;
        margin: 0 12px;
        border: 0;
        border-bottom: 3px solid #955ba0;
        border-radius: 0;
        background: none;
        box-shadow: none;
        color: #8a7a42;
        font-weight: 600;
    }
    .find {
        display: flex;
        gap: 8px;
        padding: 8px;
        border-bottom: 1px solid #ddd;
        background: #fffbe6;
    }
    .filter,
    .search {
        box-sizing: border-box;
        height: 32px;
        border: 1px solid #ccc;
        border-radius: 4px;
        background: #fff;
    }
    .filter {
        width: 32px;
    }
    .search {
        display: flex;
        flex: 1;
        align-items: center;
        gap: 8px;
        padding: 0 10px;
    }
    .search input {
        flex: 1;
        min-width: 0;
        padding: 0;
        border: 0;
        outline: 0;
        font: 13px/18px "Segoe UI", "Open Sans", sans-serif;
    }
    .jobs {
        margin: 0;
        padding: 0 16px 0 0;
        list-style: none;
        border-right: 1px solid #ddd;
    }
    .jobs li {
        display: flex;
        gap: 8px;
        box-sizing: border-box;
        height: 69px;
        padding: 8px 7px 8px 8px;
        border: 1px solid #ddd;
        border-width: 0 1px 1px 0;
    }
    .job-icon,
    .info,
    .run {
        box-sizing: border-box;
        height: 24px;
        border: 1px solid #e0cfe4;
        border-radius: 4px;
    }
    .job-icon,
    .info {
        display: grid;
        flex: none;
        place-items: center;
        width: 24px;
    }
    .info {
        margin-left: auto;
        border-color: #ccc;
    }
    .run {
        width: 64px;
        padding-top: 1px;
        background: #fcf9fd;
        color: #955ba0;
    }
    .job-body {
        flex: 1;
        min-width: 0;
    }
    .job-body h2 {
        font-size: 13px;
        line-height: 20px;
        white-space: nowrap;
    }
    .job-row {
        display: flex;
        gap: 7px;
        margin-top: 8px;
    }
    .panel footer {
        display: flex;
        align-items: center;
        justify-content: space-between;
        height: 40px;
        margin-top: auto;
        padding: 1px 14px 0;
        border-top: 1px solid #ddd;
        background: #fffbe6;
        color: #9a8c56;
    }
    .panel footer button {
        gap: 5px;
    }

    .splitter {
        width: 19px;
        background: #955ba0;
    }

    .grid-area {
        display: flex;
        flex: 1;
        flex-direction: column;
        min-width: 0;
        background: #f4f4f4;
    }
    .grid-main {
        display: flex;
        flex: 1;
        min-height: 0;
    }
    .clip {
        flex: 1;
        min-width: 0;
        overflow: hidden;
        background: #fff;
    }

    table {
        width: 100%;
        table-layout: fixed;
        border-spacing: 0;
        font-family: "Noto Sans", sans-serif;
    }
    th,
    td {
        overflow: hidden;
        padding: 2px 3px 0;
        border-bottom: 1px solid #eee;
        border-right: 1px solid #eee;
        font-weight: 400;
        text-align: left;
        white-space: nowrap;
    }
    th {
        height: 21px;
        padding: 0 0 0 3px;
        border: 1px solid #aeaeae;
        border-width: 1px 0;
    }
    .th {
        display: flex;
        align-items: center;
        height: 17px;
        overflow: hidden;
        border-right: 1px solid #b4b4b4;
    }
    .th.locked {
        gap: 5px;
    }
    td {
        height: 25px;
    }
    td div {
        overflow: hidden;
    }
    th.green {
        background: #e6ffd2;
    }
    th.picked {
        background: #74bad6;
        color: #fff;
    }
    td.picked {
        border-right-color: #0f72c4;
        box-shadow: inset 1px 0 #0f72c4;
    }
    td.frozen {
        border-right-color: #1f3a56;
    }
    .gutter {
        border: 0;
        background: #fff;
    }
    .level {
        padding: 2px 2px 0 5px;
        border-right: 0;
        background: #92abc9;
    }
    .level span {
        display: flex;
        justify-content: space-between;
    }
    .pin {
        padding: 0 0 0 1px;
        height: 27px;
    }
    .pin span {
        display: grid;
        place-items: center;
        width: 18px;
        height: 16px;
        margin-bottom: 3px;
    }
    .url {
        padding-left: 2px;
    }
    .date,
    .num {
        padding: 2px 1px 0;
        text-align: right;
    }
    .empty {
        background: #d7d7d7;
    }
    .selected td {
        background: #0078d7;
        color: #fff;
    }
    .selected .gutter {
        background: #fff;
    }
    .selected .level {
        background: #4a92d2;
    }
    .selected .empty {
        background: #69a6d9;
    }
    .selected .pin span,
    .selected .url svg {
        background: #fff;
    }

    .vbar {
        display: flex;
        flex-direction: column;
        align-items: center;
        width: 17px;
        padding: 6px 0 8px;
        background: #f8f8f8;
    }
    .vbar .thumb {
        width: 13px;
        margin-top: 19px;
        border: 1px solid #aaa;
        background: #8c8c8c;
    }
    .dialog .vbar .thumb {
        margin-top: 5px;
    }
    .vbar .down,
    .hbar .right {
        margin: auto 0 0;
    }
    .hbar {
        display: flex;
        align-items: center;
        height: 16px;
        padding: 0 24px 0 6px;
        background: #fafafa;
    }
    .hbar .thumb {
        height: 14px;
        margin-left: 7px;
        background: #8c8c8c;
    }
    .hbar .right {
        margin: 0 0 0 auto;
    }

    .viewer-tab {
        display: flex;
        gap: 5px;
        box-sizing: border-box;
        width: 44px;
        padding: 10px 8px 0 5px;
        background: #955ba0;
        color: #fff;
    }
    .chev {
        margin-top: 5px;
    }
    .viewer-side {
        display: flex;
        flex-direction: column;
        align-items: center;
        gap: 10px;
        width: 20px;
    }
    .viewer-side span {
        font-size: 26px;
        line-height: 28px;
        white-space: nowrap;
        writing-mode: vertical-rl;
    }

    .counts {
        height: 20px;
        padding-left: 7px;
        background: linear-gradient(#fff, #f3f3f3);
        font-family: "Noto Sans", sans-serif;
        line-height: 21px;
    }
    .status {
        display: flex;
        justify-content: space-between;
        height: 21px;
        padding: 0 6px 0 5px;
        background: #d2d2d2;
        color: #444;
        font-size: 11px;
        line-height: 21px;
    }
    .keys {
        display: flex;
        gap: 11px;
        color: #b0b0b0;
    }
    .edge {
        height: 2px;
        background: #444248;
    }

    .dialog {
        position: absolute;
        top: 294px;
        left: 543px;
        width: 1194px;
        border: 1px solid #666;
        background: #f0f0f0;
        box-shadow: 2px 4px 14px rgba(0, 0, 0, 0.35);
    }
    .dialog-title {
        display: flex;
        align-items: center;
        gap: 5px;
        height: 30px;
        padding: 0 9px 0 8px;
        background: #fff;
    }
    .dialog-title button {
        margin: -2px 0 0 auto;
    }
    .toolbar {
        display: flex;
        align-items: center;
        height: 24px;
        margin: 11px 38px 2px 11px;
        border-radius: 0 4px 4px 0;
        background: #fff;
    }
    .tb {
        width: 23px;
        height: 22px;
    }
    .tb.on {
        border: 1px solid #ffb84a;
        background: #ffdb7d;
    }
    .drop {
        width: 11px;
        height: 22px;
    }
    .drop .tri {
        border-width: 3px 3px 0;
        border-top-color: #000;
    }
    .drop.off .tri {
        border-top-color: #999;
    }
    .divider {
        width: 1px;
        height: 16px;
        margin: 0 3px 0 2px;
        background: #c0c0c0;
    }
    .zone.inner {
        height: 34px;
        margin: 0 5px 0 11px;
        padding: 0 3px 0 0;
        border: 0;
    }
    .settings {
        width: 34px;
        height: 34px;
        margin-left: 11px;
        border: 1px solid #cfcfcf;
    }
    .dialog-grid {
        display: flex;
        height: 429px;
        margin: 0 4px 0 11px;
    }
    .dialog-table {
        display: flex;
        flex: 1;
        flex-direction: column;
        min-width: 0;
    }
    .dialog-table .clip {
        border-bottom: 1px solid #ddd;
    }
    .rail {
        width: 6px;
        border: 1px solid #bbb;
        background: #fafafa;
    }
    .rail span {
        display: block;
        height: 24px;
        margin-top: 199px;
        border: 1px solid #aaa;
        border-width: 1px 0;
        background: #e0e0e0;
    }
    .dialog .counts {
        margin: 0 5px 0 11px;
        padding-left: 5px;
    }
    .options {
        display: flex;
        align-items: flex-start;
        padding: 5px 12px 3px 9px;
    }
    .options label {
        display: flex;
        gap: 5px;
        width: 371px;
    }
    .options label:nth-child(2) {
        width: 380px;
    }
    .options label:nth-child(3) {
        width: auto;
    }
    .options input {
        appearance: none;
        width: 13px;
        height: 13px;
        margin: 0;
        border: 1px solid #8a8a8a;
        outline: 1px solid #c8c8c8;
        outline-offset: -4px;
        background: #e8e8e8;
    }
    .close {
        width: 81px;
        height: 22px;
        margin-left: auto;
        border: 2px solid #0078d7;
        background: #e1e1e1;
    }
    .grip {
        position: absolute;
        right: 0;
        bottom: 0;
    }
</style>
